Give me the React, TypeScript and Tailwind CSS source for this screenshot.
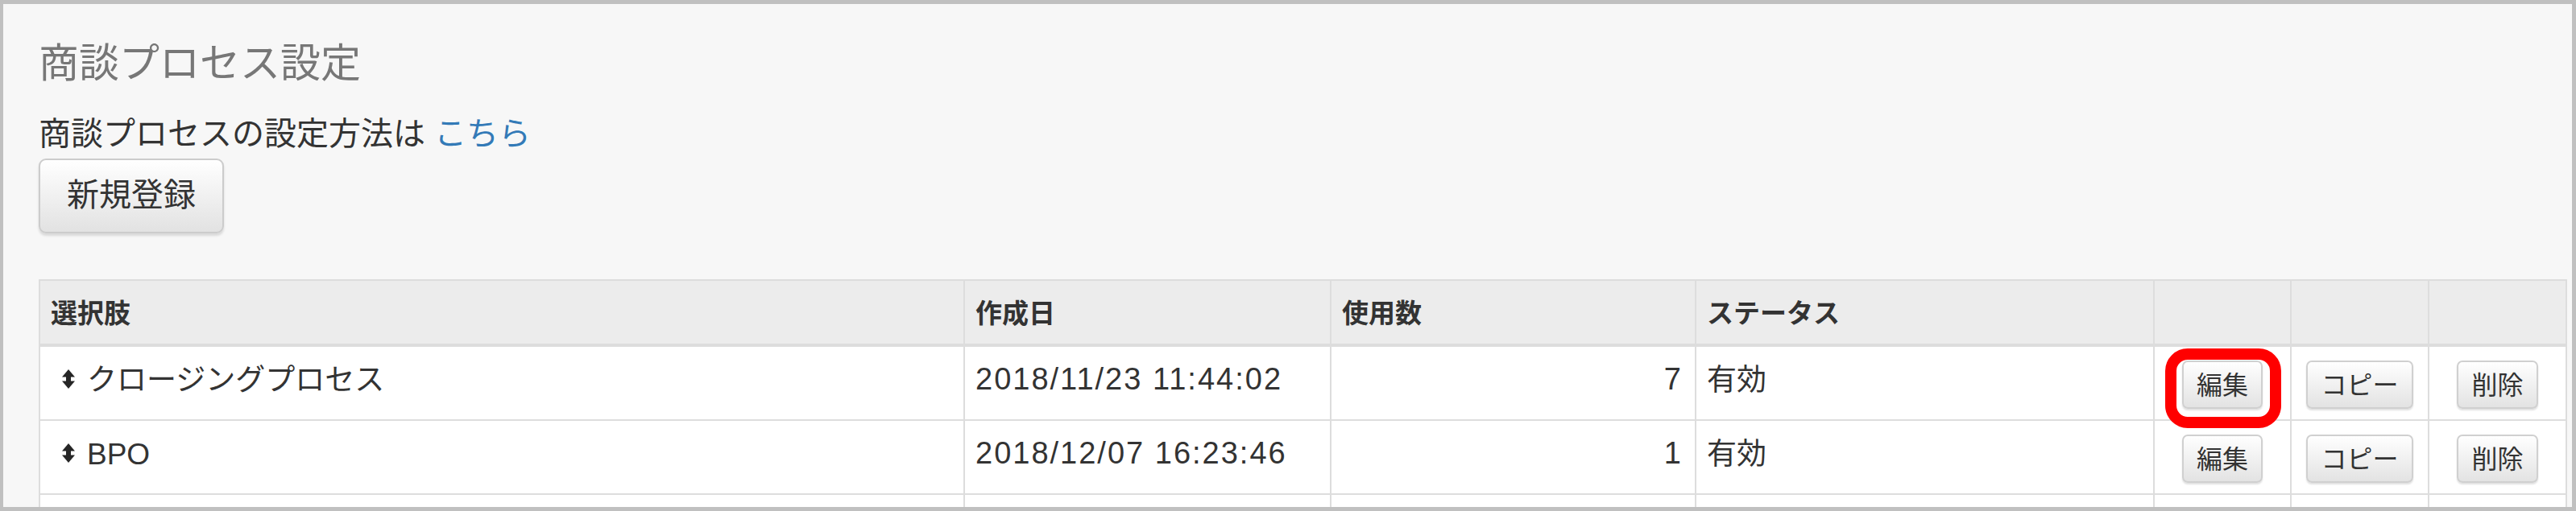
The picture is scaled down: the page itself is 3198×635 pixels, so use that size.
import React from "react";

type Row = {
  name: string;
  date: string;
  count: number | null;
  status: string;
  highlight: boolean;
  empty?: boolean;
};

const rows: Row[] = [
  { name: "クロージングプロセス", date: "2018/11/23 11:44:02", count: 7, status: "有効", highlight: true },
  { name: "BPO", date: "2018/12/07 16:23:46", count: 1, status: "有効", highlight: false },
  { name: "", date: "", count: null, status: "", highlight: false, empty: true },
];

function SortIcon() {
  return (
    <svg width="16" height="24" viewBox="0 0 16 24" className="shrink-0">
      <polygon points="0,9.5 8,0 16,9.5" fill="#262626" />
      <rect x="5" y="8" width="6" height="8" fill="#262626" />
      <polygon points="0,14.5 8,24 16,14.5" fill="#262626" />
    </svg>
  );
}

function SmallButton({ label }: { label: string }) {
  return (
    <button className="h-[60px] px-[16px] pt-[2px] rounded-[7px] border-2 border-[#d0d0d0] bg-linear-to-b from-[#ffffff] to-[#e3e3e3] text-[32px] leading-none text-[#333] shadow-[0_2px_2px_rgba(0,0,0,0.12)]">
      {label}
    </button>
  );
}

export default function App() {
  const headCell =
    "h-[82px] bg-[#ececec] border-l-2 border-b-4 border-[#dddddd] px-[13px] pt-[2px] flex items-center text-[33px] leading-none font-bold text-[#333]";
  const bodyCell = "h-[92px] bg-white border-l-2 border-b-2 border-[#dddddd] px-[13px]";

  return (
    <div className="w-[3198px] h-[635px] overflow-hidden border-t-[5px] border-l-[4px] border-r-[5px] border-b-[5px] border-[#c0c0c0] bg-[#f7f7f7] font-['Liberation_Sans','Noto_Sans_CJK_JP',sans-serif] text-[#333]">
      <div className="pl-[44px] pt-[49px]">
        <h3 className="text-[50px] leading-none font-normal text-[#777]">商談プロセス設定</h3>
        <p className="mt-[42px] text-[40px] leading-none">
          商談プロセスの設定方法は <a className="text-[#337ab7]">こちら</a>
        </p>
        <button className="mt-[11px] w-[230px] h-[93px] pb-[4px] flex items-center justify-center rounded-[9px] border-2 border-[#cccccc] bg-linear-to-b from-[#ffffff] to-[#e2e2e2] text-[40px] leading-none text-[#333] shadow-[0_3px_3px_rgba(0,0,0,0.12)]">
          新規登録
        </button>

        <div className="mt-[57px] grid grid-cols-[1148px_455px_453px_569px_170px_171px_171px] w-max border-t-2 border-r-2 border-[#dddddd]">
          <div className={headCell}>選択肢</div>
          <div className={headCell}>作成日</div>
          <div className={headCell}>使用数</div>
          <div className={headCell}>ステータス</div>
          <div className={headCell}></div>
          <div className={headCell}></div>
          <div className={headCell}></div>

          {rows.map((r, i) => (
            <React.Fragment key={i}>
              <div className={`${bodyCell} pt-[23px] text-[37px] leading-none`}>
                {!r.empty && (
                  <div className="flex items-start">
                    <span className="ml-[14px] mt-[5px] mr-[15px]">
                      <SortIcon />
                    </span>
                    <span>{r.name}</span>
                  </div>
                )}
              </div>
              <div className={`${bodyCell} pt-[21px] text-[38px] leading-none tracking-[2px]`}>{r.date}</div>
              <div className={`${bodyCell} pt-[21px] pr-[17px] text-right text-[38px] leading-none`}>
                {r.count ?? ""}
              </div>
              <div className={`${bodyCell} pt-[23px] text-[37px] leading-none`}>{r.status}</div>
              <div className={`${bodyCell} relative pt-[4px] flex items-center justify-center`}>
                {!r.empty && <SmallButton label="編集" />}
                {r.highlight && (
                  <div className="absolute left-[13px] top-[2px] w-[144px] h-[99px] border-[14px] border-[#ff0000] rounded-[28px] z-10 pointer-events-none" />
                )}
              </div>
              <div className={`${bodyCell} pt-[4px] flex items-center justify-center`}>
                {!r.empty && <SmallButton label="コピー" />}
              </div>
              <div className={`${bodyCell} pt-[4px] flex items-center justify-center`}>
                {!r.empty && <SmallButton label="削除" />}
              </div>
            </React.Fragment>
          ))}
        </div>
      </div>
    </div>
  );
}
